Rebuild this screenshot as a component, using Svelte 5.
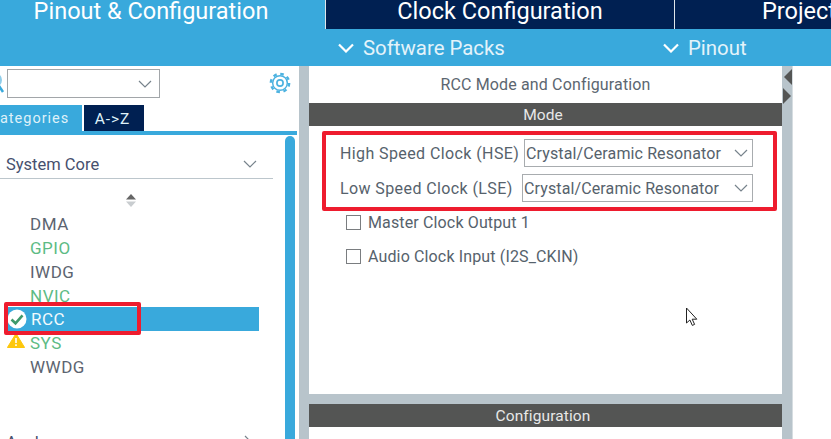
<script>
  const items = [
    { name: 'DMA', tone: 'plain' },
    { name: 'GPIO', tone: 'ok' },
    { name: 'IWDG', tone: 'plain' },
    { name: 'NVIC', tone: 'ok' },
    { name: 'RCC', tone: 'selected', icon: 'check' },
    { name: 'SYS', tone: 'ok', icon: 'warn' },
    { name: 'WWDG', tone: 'plain' }
  ];
</script>

<div class="app">
  <header class="top">
    <nav class="tabs">
      <div class="tab active">Pinout &amp; Configuration</div>
      <div class="tab clock">Clock Configuration</div>
      <div class="tab project">Project Manager</div>
    </nav>
    <div class="subbar">
      <div class="sub packs">
        <svg width="16" height="10" viewBox="0 0 16 10"><path d="M1 1.5l7 7 7-7" fill="none" stroke="#fff" stroke-width="2.2"/></svg>
        <span>Software Packs</span>
      </div>
      <div class="sub pinout">
        <svg width="16" height="10" viewBox="0 0 16 10"><path d="M1 1.5l7 7 7-7" fill="none" stroke="#fff" stroke-width="2.2"/></svg>
        <span>Pinout</span>
      </div>
    </div>
  </header>

  <main class="body">
    <aside class="side">
      <div class="search">
        <svg class="lens" width="7" height="29" viewBox="0 0 7 29">
          <circle cx="-5" cy="11" r="6" fill="none" stroke="#8fcdea" stroke-width="2"/>
          <path d="M-1 17l4 6" fill="none" stroke="#39a9dc" stroke-width="2.5"/>
        </svg>
        <div class="combo">
          <svg width="14" height="8" viewBox="0 0 14 8"><path d="M1 1l6 6 6-6" fill="none" stroke="#77838c" stroke-width="1.2"/></svg>
        </div>
        <svg class="gear" width="22" height="22" viewBox="0 0 24 24" fill="none" stroke="#4cb2e0">
          <circle cx="12" cy="12" r="10" stroke-width="2.6" stroke-dasharray="3.9 3.95"/>
          <circle cx="12" cy="12" r="8" stroke-width="1.6"/>
          <circle cx="12" cy="12" r="3.4" stroke-width="1.8"/>
        </svg>
      </div>
      <div class="seg">
        <div class="seg-cat">Categories</div>
        <div class="seg-az">A-&gt;Z</div>
      </div>
      <div class="tree">
        <div class="tree-main">
          <div class="group">
            <span>System Core</span>
            <svg width="14" height="8" viewBox="0 0 14 8"><path d="M1 1l6 6 6-6" fill="none" stroke="#77838c" stroke-width="1.2"/></svg>
          </div>
          <div class="sort">
            <svg width="10" height="13" viewBox="0 0 10 13"><path d="M5 0l5 5.5H0z" fill="#666"/><path d="M5 13L0 7.5h10z" fill="#c9cdd0"/></svg>
          </div>
          <ul class="list">
            {#each items as item}
              <li class={item.tone}>
                {#if item.icon === 'check'}
                  <svg class="ico" width="20" height="20" viewBox="0 0 20 20">
                    <circle cx="10" cy="10" r="9.5" fill="#fff"/>
                    <path d="M4.5 10.5l4 3.8 7-8" fill="none" stroke="#3f9a6b" stroke-width="2.6"/>
                  </svg>
                {:else if item.icon === 'warn'}
                  <svg class="ico" width="18" height="15" viewBox="0 0 18 15">
                    <path d="M9 .5L17.6 14.5H.4z" fill="#fdc70c" stroke="#fdc70c" stroke-linejoin="round"/>
                    <path d="M9 5v5M9 11.2v1.8" stroke="#fff" stroke-width="1.6"/>
                  </svg>
                {/if}
                <span>{item.name}</span>
              </li>
            {/each}
          </ul>
          <div class="group next">
            <span>Analog</span>
            <svg width="8" height="14" viewBox="0 0 8 14"><path d="M1 1l6 6-6 6" fill="none" stroke="#77838c" stroke-width="1.2"/></svg>
          </div>
        </div>
        <div class="scroll"></div>
      </div>
    </aside>

    <section class="center">
      <div class="mode-panel">
        <div class="title">RCC Mode and Configuration</div>
        <div class="bar">Mode</div>
        <div class="form">
          <div class="row">
            <span class="label">High Speed Clock (HSE)</span>
            <div class="select hse">Crystal/Ceramic Resonator
              <svg width="14" height="8" viewBox="0 0 14 8"><path d="M1 1l6 6 6-6" fill="none" stroke="#77838c" stroke-width="1.2"/></svg>
            </div>
          </div>
          <div class="row second">
            <span class="label">Low Speed Clock (LSE)</span>
            <div class="select lse">Crystal/Ceramic Resonator
              <svg width="14" height="8" viewBox="0 0 14 8"><path d="M1 1l6 6 6-6" fill="none" stroke="#77838c" stroke-width="1.2"/></svg>
            </div>
          </div>
          <div class="check first"><span class="box"></span>Master Clock Output 1</div>
          <div class="check"><span class="box"></span>Audio Clock Input (I2S_CKIN)</div>
        </div>
      </div>
      <div class="config-panel">
        <div class="bar">Configuration</div>
      </div>
    </section>

    <div class="divider">
      <span class="tri left"></span>
      <span class="tri right"></span>
    </div>
    <div class="rest"></div>
  </main>

  <div class="mark mark-rcc"></div>
  <div class="mark mark-clock"></div>
  <svg class="cursor" width="14" height="21" viewBox="0 0 14 21">
    <path d="M1.5 1v15l3.4-3 2.4 5.4 2.3-1-2.4-5.2h4.6z" fill="#fff" stroke="#222" stroke-width="1"/>
  </svg>
</div>

<style>
  :global(body) {
    margin: 0;
    background: #fff;
  }
  .app {
    position: relative;
    width: 831px;
    height: 439px;
    overflow: hidden;
    display: flex;
    flex-direction: column;
    font-family: Roboto, "Liberation Sans", sans-serif;
    color: #56626c;
  }
  .top {
    height: 66px;
    flex: none;
    background: #39a9dc;
    color: #fff;
  }
  .tabs {
    display: flex;
    height: 29px;
    background: #002052;
  }
  .tab {
    font-size: 23.5px;
    line-height: 22px;
    text-align: center;
    white-space: nowrap;
    overflow: hidden;
  }
  .tab.active {
    width: 325px;
    padding-right: 23px;
    box-sizing: border-box;
    background: #39a9dc;
  }
  .tab.clock {
    width: 350px;
    border-left: 1px solid #dfe6ea;
    border-right: 1px solid #dfe6ea;
    box-sizing: border-box;
  }
  .tab.project {
    flex: 1;
    text-align: left;
    padding-left: 87px;
  }
  .subbar {
    display: flex;
    height: 37px;
    font-size: 20.4px;
    color: #e4f3fa;
  }
  .sub {
    display: flex;
    align-items: center;
    gap: 9px;
  }
  .packs {
    margin-left: 338px;
    width: 325px;
  }
  .body {
    flex: 1;
    display: flex;
    min-height: 0;
    background: #b8c4cb;
  }
  .side {
    width: 299px;
    flex: none;
    display: flex;
    flex-direction: column;
    background: #fff;
  }
  .search {
    height: 39px;
    display: flex;
    align-items: flex-start;
    padding: 3px 0 0;
    box-sizing: border-box;
  }
  .lens {
    flex: none;
  }
  .combo {
    width: 153px;
    height: 29px;
    box-sizing: border-box;
    border: 1px solid #a2a6a9;
    display: flex;
    align-items: center;
    justify-content: flex-end;
    padding-right: 7px;
  }
  .gear {
    margin: 3px 0 0 109px;
  }
  .seg {
    display: flex;
    height: 30px;
    box-sizing: border-box;
    border-bottom: 4px solid #39a9dc;
    font-size: 14.5px;
    letter-spacing: 1px;
    line-height: 28px;
    color: #dff1f9;
    width: 297px;
  }
  .seg-cat {
    width: 82px;
    margin-right: 2px;
    background: #39a9dc;
    text-indent: -10.5px;
    overflow: hidden;
    white-space: nowrap;
  }
  .seg-az {
    width: 60px;
    background: #002052;
    text-align: center;
    font-size: 15.5px;
    letter-spacing: 0.9px;
    padding-right: 3px;
    box-sizing: border-box;
  }
  .tree {
    flex: 1;
    display: flex;
    min-height: 0;
    padding-top: 1px;
  }
  .tree-main {
    width: 285px;
    flex: none;
  }
  .scroll {
    width: 10px;
    background: #39a9dc;
    border-radius: 5px 5px 0 0;
  }
  .group {
    width: 273px;
    height: 43px;
    box-sizing: border-box;
    border-bottom: 1px solid #bcc6cc;
    display: flex;
    align-items: center;
    justify-content: space-between;
    padding: 14px 16px 0 6px;
    font-size: 16.5px;
    color: #46506e;
  }
  .sort {
    height: 31px;
    padding-top: 15px;
    box-sizing: border-box;
    display: flex;
    justify-content: center;
    width: 261px;
    line-height: 0;
  }
  .list {
    list-style: none;
    margin: 0;
    padding: 2.6px 0 0;
    width: 259px;
  }
  .list li {
    height: 23.7px;
    display: flex;
    align-items: center;
    position: relative;
    padding-left: 30px;
    font-size: 17px;
    letter-spacing: 0.5px;
    color: #5c6470;
  }
  .list li.ok {
    color: #5dbb84;
  }
  .list li.selected {
    background: #39a9dc;
    color: #f2fafd;
    margin-left: 5px;
    padding-left: 26px;
  }
  .ico {
    position: absolute;
    left: 7px;
    top: 2px;
  }
  .selected .ico {
    left: 2px;
    top: 2px;
  }
  .group.next {
    border: 0;
    padding: 0 21px 0 6px;
    margin-top: 54.4px;
    height: 20px;
    align-items: flex-start;
  }
  .group.next svg {
    margin-top: 2px;
  }
  .center {
    width: 473px;
    flex: none;
    margin-left: 10px;
    display: flex;
    flex-direction: column;
    gap: 10px;
  }
  .mode-panel {
    height: 328px;
    flex: none;
    background: #fff;
  }
  .title {
    height: 37px;
    font-size: 16px;
    letter-spacing: 0.15px;
    line-height: 37px;
    text-align: center;
    color: #5c6670;
  }
  .bar {
    height: 23px;
    background: #545554;
    color: #e8e8e8;
    font-size: 15.5px;
    letter-spacing: 0.1px;
    line-height: 25px;
    text-align: center;
    padding-right: 5px;
    box-sizing: border-box;
  }
  .form {
    padding: 13px 0 0 31px;
    font-size: 16px;
    position: relative;
  }
  .row {
    display: flex;
    align-items: center;
    height: 28px;
  }
  .row.second {
    margin-top: 7px;
  }
  .label {
    letter-spacing: 0.4px;
    white-space: nowrap;
  }
  .select {
    height: 28px;
    box-sizing: border-box;
    border: 1px solid #a8acaf;
    display: flex;
    align-items: center;
    justify-content: space-between;
    padding: 0 4px 0 1px;
    letter-spacing: 0.12px;
    white-space: nowrap;
    position: absolute;
    right: 29px;
  }
  .select.hse {
    width: 229px;
  }
  .select.lse {
    width: 231px;
  }
  .check {
    display: flex;
    align-items: center;
    gap: 7px;
    margin: 19px 0 0 6px;
    height: 15px;
    letter-spacing: 0.14px;
    white-space: nowrap;
  }
  .check.first {
    margin-top: 13px;
  }
  .box {
    width: 15px;
    height: 15px;
    box-sizing: border-box;
    border: 1.5px solid #7a7d80;
    background: #fff;
    flex: none;
  }
  .config-panel {
    flex: 1;
    background: #fff;
  }
  .divider {
    width: 10px;
    flex: none;
    position: relative;
    background: #b8c4cb;
  }
  .tri {
    position: absolute;
    width: 0;
    height: 0;
    border-top: 8px solid transparent;
    border-bottom: 8px solid transparent;
  }
  .tri.left {
    top: 3px;
    right: 0;
    border-right: 8px solid #545554;
  }
  .tri.right {
    top: 22px;
    left: 1px;
    border-left: 8px solid #545554;
  }
  .rest {
    flex: 1;
    background: #fff;
    border-left: 1px solid #d6dde1;
  }
  .mark {
    position: absolute;
    box-sizing: border-box;
    border: 4px solid #ee1c2e;
    border-radius: 2px;
    pointer-events: none;
  }
  .mark-rcc {
    left: 4px;
    top: 302px;
    width: 137px;
    height: 33px;
  }
  .mark-clock {
    left: 322px;
    top: 131px;
    width: 455px;
    height: 80px;
  }
  .cursor {
    position: absolute;
    left: 685px;
    top: 307px;
  }
</style>
